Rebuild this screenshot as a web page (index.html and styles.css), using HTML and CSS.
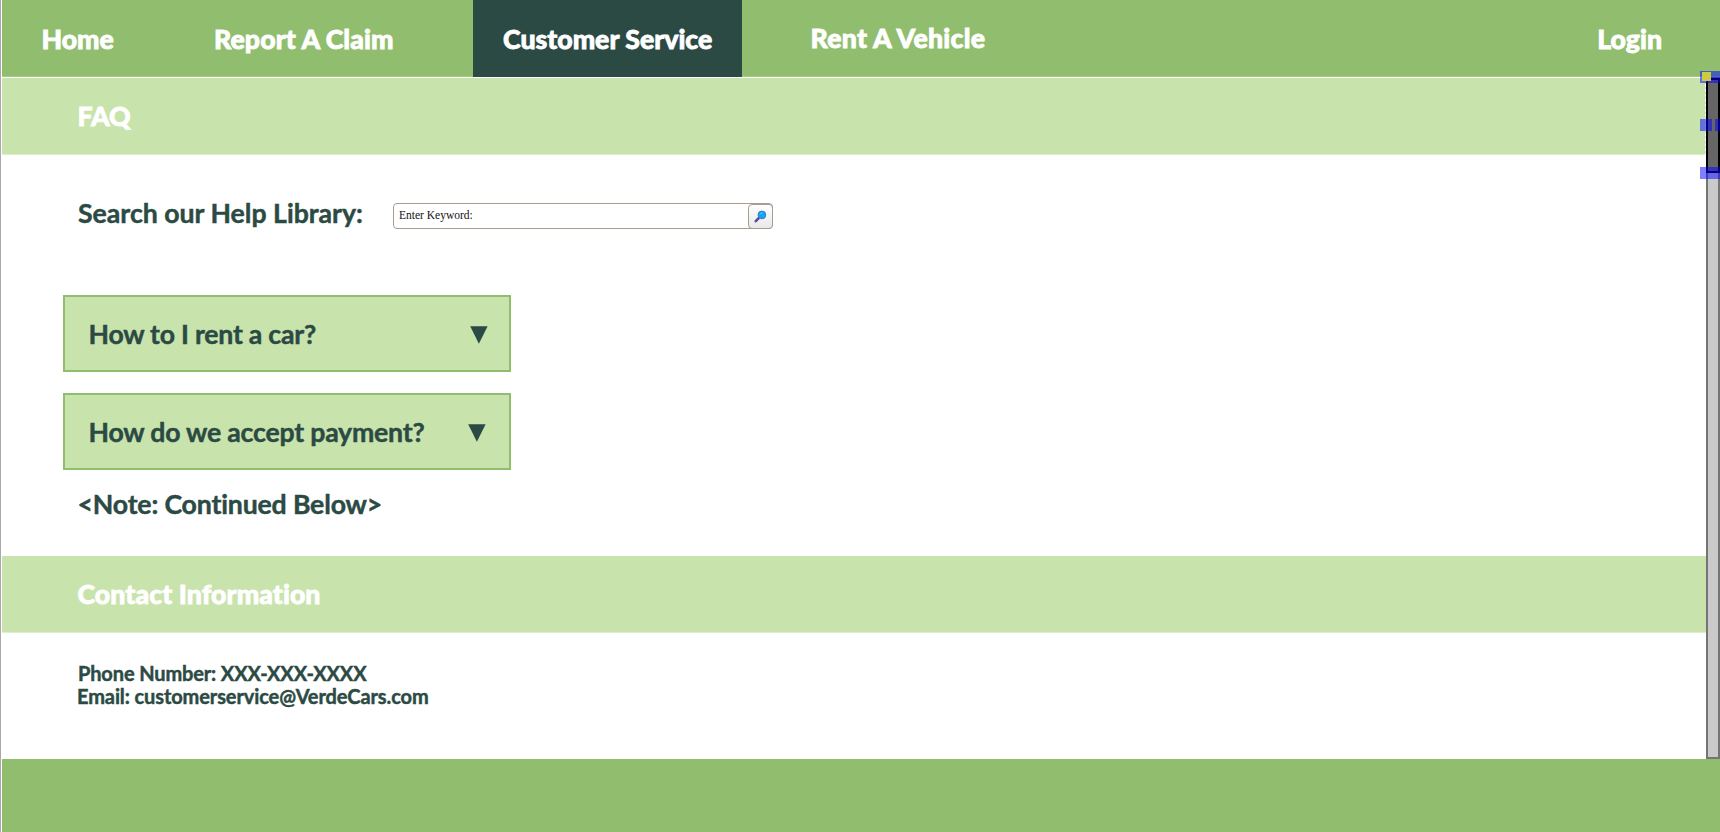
FILE: index.html
```html
<!DOCTYPE html>
<html lang="en">
<head>
<meta charset="utf-8">
<title>Customer Service</title>
<link rel="stylesheet" href="styles.css">
</head>
<body>
<div class="page">
  <nav class="nav">
    <a class="nav-link home">Home</a>
    <a class="nav-link report">Report A Claim</a>
    <a class="nav-link active"><span>Customer Service</span></a>
    <a class="nav-link rent">Rent A Vehicle</a>
    <a class="nav-link login">Login</a>
  </nav>
  <div class="body">
    <main class="content">
      <h2 class="band"><span class="faq-title">FAQ</span></h2>
      <section class="faq">
        <div class="search">
          <label class="search-label">Search our Help Library:</label>
          <div class="search-box">
            <span class="placeholder">Enter Keyword:</span>
            <button class="search-button" aria-label="Search">
              <svg width="13" height="13" viewBox="0 0 13 13"><path d="M1.8 11.2 5.2 7.6" stroke="#5b4a9c" stroke-width="2.6" stroke-linecap="round"/><circle cx="7.9" cy="4.9" r="3.9" fill="#12a5f4" stroke="#3f7cc9" stroke-width="1"/><path d="M6.2 4.2Q7 2.8 8.4 2.9" stroke="#6fd0ff" fill="none"/></svg>
            </button>
          </div>
        </div>
        <div class="question"><span class="q1">How to I rent a car?</span><svg class="arrow a1" width="18" height="18" viewBox="0 0 18 18"><path d="M.2.3H17.6L8.9 17.8Z"/></svg></div>
        <div class="question"><span class="q2">How do we accept payment?</span><svg class="arrow a2" width="18" height="18" viewBox="0 0 18 18"><path d="M.2.3H17.6L8.9 17.8Z"/></svg></div>
        <p class="note"><span>&lt;Note: Continued Below&gt;</span></p>
      </section>
      <h2 class="band contact-band"><span class="contact-title">Contact Information</span></h2>
      <section class="contact">
        <p class="phone"><span>Phone Number: XXX-XXX-XXXX</span></p>
        <p class="email"><span>Email: customerservice@VerdeCars.com</span></p>
      </section>
    </main>
    <div class="scrollbar">
      <div class="thumb"></div>
      <i class="guide"></i>
      <i class="handle h1"></i><i class="handle h2"></i><i class="handle h3"></i><i class="handle h4"></i><i class="handle h5"></i><i class="handle h6"></i>
      <i class="pin"></i>
    </div>
  </div>
  <footer class="footer"></footer>
</div>
</body>
</html>
```

FILE: styles.css
```css
* { box-sizing: border-box; }
body { margin: 0; background: #fff; overflow: hidden; font-family: Lato, sans-serif; font-weight: 700; font-size: 26.67px; line-height: 32px; color: #2c4a44; white-space: nowrap; font-variant-ligatures: none; -webkit-text-stroke: .45px currentColor; }
h2, p { margin: 0; font: inherit; }
.page { width: 1720px; height: 832px; border-left: 1px solid #a9a9a9; padding-left: 1px; display: flex; flex-direction: column; }
.nav { height: 77px; background: #91be6e; border-bottom: 1px solid #a2c885; display: flex; align-items: flex-start; color: #fff; font-weight: 900; -webkit-text-stroke: .8px #fff; flex: none; }
.nav-link { padding-top: 23px; height: 77px; }
.home { width: 172px; padding-left: 39.5px; }
.report { width: 299px; padding-left: 40px; letter-spacing: .08px; }
.active { width: 269px; padding-left: 30px; background: #2c4a44; }
.rent { padding: 22px 0 0 68.5px; letter-spacing: .27px; }
.login { margin-left: auto; padding-right: 58px; }
.body { display: flex; height: 682px; flex: none; }
.content { width: 1704px; padding-top: 1px; }
.band { height: 77px; background: #c8e3ac; border-bottom: 1px solid #dceecb; color: #fff; font-weight: 900; -webkit-text-stroke: .8px #fff; padding: 22px 0 0 75.5px; }
.faq { height: 401px; padding: 42px 0 0 61px; }
.search { display: flex; height: 98px; padding-left: 15px; }
.search-label { width: 315px; }
.search-box { margin-top: 6px; width: 380px; height: 26px; border: 1px solid #a99c90; border-radius: 4px; display: flex; justify-content: space-between; font: 13px/25px "Liberation Serif", serif; color: #111; padding-left: 5px; -webkit-text-stroke: 0; }
.placeholder { line-height: 22px; transform: scaleX(.885); transform-origin: 0 0; }
.search-button { margin: 0 -1px -1px 0; align-self: flex-end; width: 25px; height: 25px; padding: 0; border: 1px solid #a99c90; border-radius: 4px; background: linear-gradient(#fff, #e9e9e9); display: flex; align-items: center; justify-content: center; }
.question { width: 448px; height: 77px; margin-bottom: 21px; border: 2px solid #91be6e; background: #c8e3ac; display: flex; justify-content: space-between; padding: 21px 21px 0 23.5px; }
.q1 { letter-spacing: -.23px; }
.q2 { letter-spacing: -.2px; }
.arrow { margin-top: 8px; fill: #2c4a44; }
.a2 { margin-right: 2px; }
.note { padding-left: 14.5px; margin-top: -3px; letter-spacing: -.16px; }
.contact-title { letter-spacing: .08px; }
.contact { padding: 29px 0 0 76px; font-size: 20px; line-height: 23px; }
.phone { letter-spacing: -.13px; }
.email { letter-spacing: -.1px; margin-left: -1px; }
.scrollbar { position: relative; width: 14px; background: #cacaca; border: 2px solid #757575; }
.thumb { position: absolute; left: -2px; top: -1px; width: 14px; height: 95px; border: 2px solid #000; background: #666; }
.guide { position: absolute; left: -3px; top: 0; height: 92px; border-left: 1px dashed #fff; }
.handle { position: absolute; width: 12px; height: 12px; background: rgba(0, 0, 255, .5); }
.h1 { left: -8px; top: -8px; } .h2 { left: 4px; top: -8px; width: 8px; }
.h3 { left: -8px; top: 40px; } .h4 { left: 7px; top: 40px; width: 5px; }
.h5 { left: -8px; top: 88px; } .h6 { left: 4px; top: 88px; width: 8px; }
.pin { position: absolute; left: -6px; top: -7px; width: 9px; height: 9px; background: #cccc42; }
.footer { flex: 1; background: #91be6e; }
```
